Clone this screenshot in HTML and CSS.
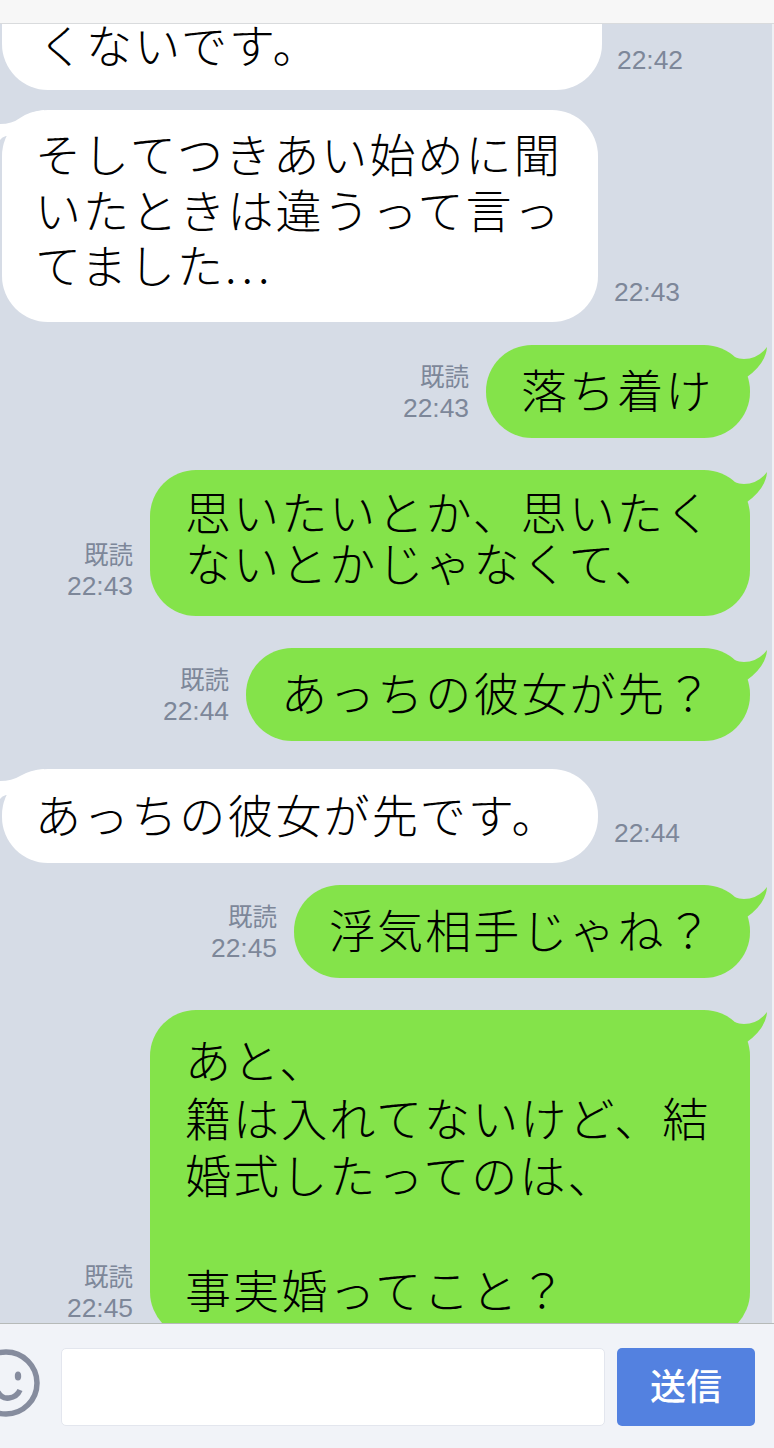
FILE: index.html
```html
<!DOCTYPE html>
<html lang="ja">
<head>
<meta charset="utf-8">
<title>トーク</title>
<link rel="stylesheet" href="styles.css">
</head>
<body>
<div class="phone">
  <header class="topbar"></header>
  <main class="chat">
    <div class="row in row-1">
      <div class="bubble white clipped">くないです。</div>
      <div class="meta time-1"><span>22:42</span></div>
    </div>
    <div class="row in row-2">
      <div class="bubble white three-lines">
        <svg class="tail tail-in" viewBox="0 0 40 40"><path d="M0 14Q12 14 20 8Q30 1 44 0L44 30L6 26Q2 27 0 30Z"/></svg>
        そしてつきあい始めに聞<br>いたときは違うって言っ<br>てました<span class="dots">...</span>
      </div>
      <div class="meta time-2"><span>22:43</span></div>
    </div>
    <div class="row out row-3">
      <div class="meta"><span>既読</span><span>22:43</span></div>
      <div class="bubble green w-264">
        <svg class="tail tail-out" viewBox="0 0 40 40"><path d="M-5 6Q4 14 14 14Q28 14 37 2Q36 18 17 32L-5 32Z"/></svg>
        落ち着け
      </div>
    </div>
    <div class="row out row-4">
      <div class="meta"><span>既読</span><span>22:43</span></div>
      <div class="bubble green w-600 two-lines">
        <svg class="tail tail-out" viewBox="0 0 40 40"><path d="M-5 6Q4 14 14 14Q28 14 37 2Q36 18 17 32L-5 32Z"/></svg>
        思いたいとか、思いたく<br>ないとかじゃなくて、
      </div>
    </div>
    <div class="row out row-5">
      <div class="meta"><span>既読</span><span>22:44</span></div>
      <div class="bubble green w-504">
        <svg class="tail tail-out" viewBox="0 0 40 40"><path d="M-5 6Q4 14 14 14Q28 14 37 2Q36 18 17 32L-5 32Z"/></svg>
        あっちの彼女が先？
      </div>
    </div>
    <div class="row in row-6">
      <div class="bubble white one-line">
        <svg class="tail tail-in" viewBox="0 0 40 40"><path d="M0 12Q12 12 20 7Q30 1 44 0L44 30L6 26Q2 27 0 30Z"/></svg>
        あっちの彼女が先です。
      </div>
      <div class="meta time-2"><span>22:44</span></div>
    </div>
    <div class="row out row-7">
      <div class="meta"><span>既読</span><span>22:45</span></div>
      <div class="bubble green w-456">
        <svg class="tail tail-out" viewBox="0 0 40 40"><path d="M-5 6Q4 14 14 14Q28 14 37 2Q36 18 17 32L-5 32Z"/></svg>
        浮気相手じゃね？
      </div>
    </div>
    <div class="row out row-8">
      <div class="meta meta-last"><span>既読</span><span>22:45</span></div>
      <div class="bubble green w-600 last">
        <svg class="tail tail-out" viewBox="0 0 40 40"><path d="M-5 6Q4 14 14 14Q28 14 37 2Q36 18 17 32L-5 32Z"/></svg>
        あと、<br>籍は入れてないけど、結<br>婚式したってのは、<br><br>事実婚ってこと？
      </div>
    </div>
  </main>
  <footer class="composer">
    <svg class="smile" viewBox="0 0 44 72" aria-hidden="true">
      <circle cx="6" cy="36" r="31"/>
      <path d="M-2 45Q2 52 9 51Q17 50 20 43"/>
      <ellipse cx="18" cy="29" rx="3.2" ry="4.5"/>
    </svg>
    <div class="input"></div>
    <button class="send" type="button">送信</button>
  </footer>
  <div class="edge"></div>
</div>
</body>
</html>
```
FILE: styles.css
```css
* { box-sizing: border-box; }
html, body { margin: 0; padding: 0; }
body {
  width: 774px;
  height: 1448px;
  overflow: hidden;
  background: #f1f3f8;
  font-family: "Noto Sans CJK JP", "Noto Sans", sans-serif;
}
.phone {
  position: relative;
  width: 774px;
  height: 1448px;
  display: flex;
  flex-direction: column;
  overflow: hidden;
}
.topbar {
  height: 24px;
  flex: none;
  background: #f7f7f7;
  border-bottom: 1px solid #d9dbdd;
}
.chat {
  height: 1299px;
  flex: none;
  overflow: hidden;
  background: #d6dce6;
  display: flex;
  flex-direction: column;
}
.row { display: flex; align-items: flex-end; flex: none; }
.row.in { padding-left: 2px; }
.row.out { justify-content: flex-end; padding-right: 24px; }
.bubble {
  position: relative;
  flex: none;
  font-size: 46px;
  font-weight: 300;
  letter-spacing: 2.1px;
  line-height: 53px;
  color: #000;
  white-space: nowrap;
  border-radius: 46px;
  padding: 17px 0 23px 35px;
}
.dots { letter-spacing: 5px; }
.bubble.white { background: #fff; width: 596px; padding-left: 33px; }
.bubble.green { background: #84e34a; }
.w-264 { width: 264px; }
.w-456 { width: 456px; }
.w-504 { width: 504px; }
.w-600 { width: 600px; }
.bubble.three-lines { line-height: 55.5px; padding-top: 15px; padding-bottom: 30.5px; }
.bubble.two-lines { line-height: 51px; padding-top: 15px; padding-bottom: 29px; }
.bubble.one-line { padding-top: 18px; padding-bottom: 23px; }
.bubble.last { line-height: 57.5px; padding-top: 20px; padding-bottom: 20px; }
.bubble.clipped {
  width: 600px;
  height: 90px;
  margin-top: -24px;
  padding: 20px 0 0 36px;
  border-radius: 0 0 46px 46px;
  line-height: 46px;
}
.tail { position: absolute; width: 40px; height: 40px; overflow: visible; }
.tail-out { top: 0; right: -20px; fill: #84e34a; }
.tail-in { top: 0; left: -2px; fill: #fff; }
.meta {
  display: flex;
  flex-direction: column;
  align-items: flex-end;
  font-size: 24.5px;
  line-height: 32px;
  color: #7d8799;
  white-space: nowrap;
  margin-right: 17px;
  margin-bottom: 14px;
}
.meta span:last-child { font-family: "Liberation Sans", sans-serif; font-size: 26.4px; }
.meta-last { margin-bottom: 0; align-self: flex-start; margin-top: 250px; }
.meta.time-1 { margin: 0 0 14px 15px; }
.meta.time-2 { margin: 0 0 14px 16px; }
.row-2 { margin-top: 20px; }
.row-3 { margin-top: 23px; }
.row-4 { margin-top: 32px; }
.row-5 { margin-top: 32px; }
.row-6 { margin-top: 28px; }
.row-7 { margin-top: 22px; }
.row-8 { margin-top: 32px; }
.composer {
  flex: 1;
  display: flex;
  align-items: flex-start;
  background: #f1f3f8;
  border-top: 1px solid #b6bab8;
  padding: 24px 19px 0 0;
  position: relative;
}
.smile {
  width: 44px;
  height: 72px;
  margin-top: -1px;
  margin-right: 17px;
  flex: none;
  overflow: hidden;
  fill: none;
  stroke: #868c9e;
  stroke-width: 5.5;
}
.smile ellipse { fill: #868c9e; stroke: none; }
.input {
  width: 544px;
  height: 78px;
  background: #fff;
  border: 1px solid #e3e6ee;
  border-radius: 5px;
  flex: none;
}
.send {
  width: 138px;
  height: 78px;
  margin-left: 12px;
  border: 0;
  border-radius: 5px;
  background: #5381e0;
  color: #fff;
  font-family: "Noto Sans CJK JP", sans-serif;
  font-size: 36px;
  font-weight: 500;
  padding: 0 0 6px;
  flex: none;
}
.edge {
  position: absolute;
  top: 24px;
  right: 0;
  width: 2px;
  height: 1299px;
  background: #eef0f4;
}
```
